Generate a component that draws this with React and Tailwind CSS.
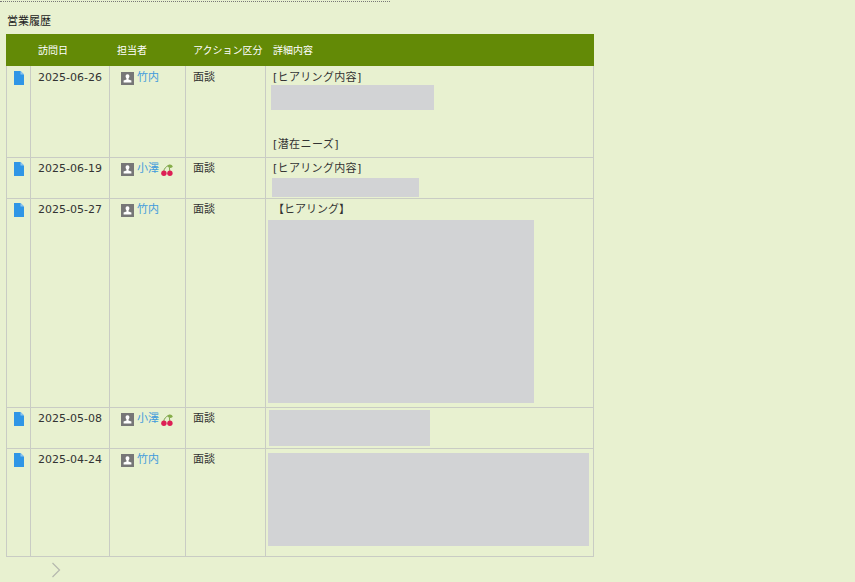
const FONT = "font-['DejaVu_Sans','Noto_Sans_CJK_JP',sans-serif]";

function FileIcon() {
  return (
    <svg width="10" height="14" viewBox="0 0 10 14" className="block">
      <path d="M0 0H6.5L10 3.5V14H0Z" fill="#2f96e6" />
      <path d="M6.5 0L10 3.5H6.5Z" fill="#8cc4ee" />
    </svg>
  );
}

function UserIcon() {
  return (
    <svg width="13" height="13" viewBox="0 0 13 13" className="block shrink-0 mt-[2px]">
      <rect width="13" height="13" fill="#777777" />
      <path d="M6.5 2.2C5.3 2.2 4.6 3 4.6 4.2C4.6 5.2 5.1 5.9 5.5 6.4V7.4L2.6 8.6V10.6H10.4V8.6L7.5 7.4V6.4C7.9 5.9 8.4 5.2 8.4 4.2C8.4 3 7.7 2.2 6.5 2.2Z" fill="#ffffff" />
    </svg>
  );
}

function Cherry() {
  return (
    <svg width="12" height="12" viewBox="0 0 12 12" className="block shrink-0 mt-[3px] -ml-[1px]">
      <path d="M2.8 7C3.2 4.5 5 2.6 7.5 1.5M8.8 7C8.8 5 8.3 3 7.5 1.5" stroke="#6f9a3c" strokeWidth="0.9" fill="none" />
      <path d="M6.5 1.8C8 -0.2 10.8 -0.2 11.8 2.8C10.5 4.6 8 4.2 6.5 1.8Z" fill="#86ad4a" />
      <circle cx="2.9" cy="9.2" r="2.7" fill="#dd1f55" />
      <circle cx="8.9" cy="9.2" r="2.7" fill="#dd1f55" />
    </svg>
  );
}

function Person({ name, cherry }) {
  return (
    <div className="flex items-start gap-[3px] pl-[11px]">
      <UserIcon />
      <a className="text-[#3f9bdc]">{name}</a>
      {cherry && <Cherry />}
    </div>
  );
}

function Box({ className }) {
  return <div className={`bg-[#d2d3d5] ${className}`} />;
}

function Row({ date, name, cherry, height, className = "", children }) {
  return (
    <tr className={`align-top ${className}`} style={{ height }}>
      <td className="border border-[#c9ccc4] pt-[4px] pl-[7px]"><FileIcon /></td>
      <td className="border border-[#c9ccc4] pt-[3px] pl-[7px] leading-[15px]">{date}</td>
      <td className="border border-[#c9ccc4] pt-[3px] leading-[15px]"><Person name={name} cherry={cherry} /></td>
      <td className="border border-[#c9ccc4] pt-[3px] pl-[7px] leading-[15px]">面談</td>
      <td className="border border-[#c9ccc4] pt-[3px] leading-[15px]">{children}</td>
    </tr>
  );
}

export default function App() {
  return (
    <div className={`${FONT} w-[855px] h-[582px] overflow-hidden bg-[#e8f1d0] text-[11px] text-[#333333]`}>
      <div className="w-[390px] mt-[1px] border-t border-dotted border-[#777777]" />
      <div className="pl-[7px] pt-[13px] pb-[5px] leading-[14px] text-[#222222]">営業履歴</div>
      <div className="pl-[6px]">
        <table className="table-fixed border-collapse w-[587px]">
          <colgroup>
            <col className="w-[24px]" />
            <col className="w-[79px]" />
            <col className="w-[76px]" />
            <col className="w-[80px]" />
            <col className="w-[328px]" />
          </colgroup>
          <thead>
            <tr className="h-[32px] bg-[#638a06] text-[10px] text-white text-left">
              <th className="font-normal border-x border-[#638a06]"></th>
              <th className="font-normal border-x border-[#638a06] pl-[7px]">訪問日</th>
              <th className="font-normal border-x border-[#638a06] pl-[7px]">担当者</th>
              <th className="font-normal border-x border-[#638a06] pl-[7px] whitespace-nowrap">アクション区分</th>
              <th className="font-normal border-x border-[#638a06] pl-[7px]">詳細内容</th>
            </tr>
          </thead>
          <tbody>
            <Row date="2025-06-26" name="竹内" height={91} className="[&>td]:border-t-0 [&>td]:pt-[4px] [&>td:first-child]:pt-[5px]">
              <div className="pl-[7px] tracking-[0.33px]">[ヒアリング内容]</div>
              <Box className="ml-[5px] w-[163px] h-[25px]" />
              <div className="pl-[7px] mt-[27px] tracking-[0.4px]">[潜在ニーズ]</div>
            </Row>
            <Row date="2025-06-19" name="小澤" cherry height={41}>
              <div className="pl-[7px] tracking-[0.33px]">[ヒアリング内容]</div>
              <Box className="ml-[6px] mt-[2px] w-[147px] h-[19px]" />
            </Row>
            <Row date="2025-05-27" name="竹内" height={209}>
              <div className="pl-[7px]">【ヒアリング】</div>
              <Box className="ml-[2px] mt-[3px] w-[266px] h-[183px]" />
            </Row>
            <Row date="2025-05-08" name="小澤" cherry height={41}>
              <Box className="ml-[3px] -mt-[1px] w-[161px] h-[36px]" />
            </Row>
            <Row date="2025-04-24" name="竹内" height={108}>
              <Box className="ml-[2px] mt-[1px] w-[321px] h-[93px]" />
            </Row>
          </tbody>
        </table>
      </div>
      <div className="pl-[51px] pt-[5px]">
        <svg width="10" height="16" viewBox="0 0 10 16" className="block">
          <path d="M1.5 1L8.5 8L1.5 15" stroke="#b5b8ae" strokeWidth="1.2" fill="none" />
        </svg>
      </div>
    </div>
  );
}
